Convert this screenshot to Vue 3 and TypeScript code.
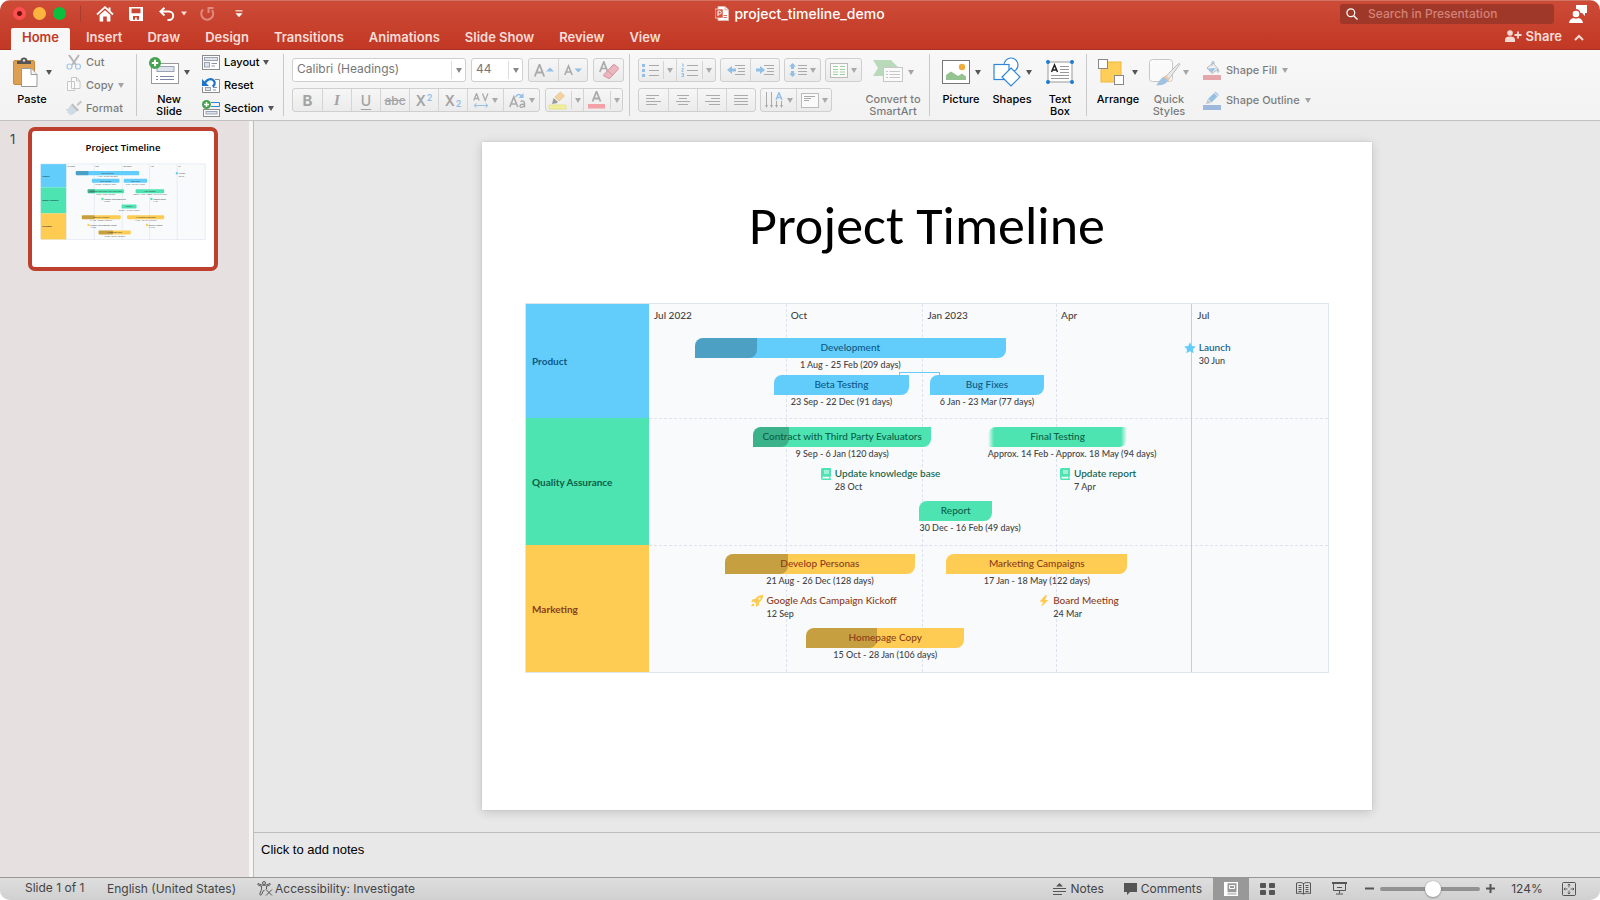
<script setup lang="ts">
import { computed, ref } from 'vue'

interface Item {
  kind: 'bar' | 'marker' | 'link'
  label?: string
  dates?: string
  from: string
  to?: string
  progress?: number
  fuzzy?: boolean
  icon?: 'star' | 'book' | 'rocket' | 'bolt'
}
interface Row { name: string; tone: string; color: string; lanes: Item[][] }

const tabs = ['Home', 'Insert', 'Draw', 'Design', 'Transitions', 'Animations', 'Slide Show', 'Review', 'View']
const activeTab = ref('Home')
const zoom = ref(54)
const search = ref('')
const notes = ref('')

const START = Date.UTC(2022, 6, 1)
const day = (d: string) => Math.round((Date.parse(d + 'T00:00:00Z') - START) / 86400000)

const months = [
  { label: 'Jul 2022', at: '2022-07-01' },
  { label: 'Oct', at: '2022-10-01' },
  { label: 'Jan 2023', at: '2023-01-01' },
  { label: 'Apr', at: '2023-04-01' },
  { label: 'Jul', at: '2023-07-01' },
]

const rows: Row[] = [
  {
    name: 'Product', tone: 'blue', color: '#62cdfb', lanes: [
      [
        { kind: 'bar', label: 'Development', dates: '1 Aug - 25 Feb (209 days)', from: '2022-08-01', to: '2023-02-26', progress: 20 },
        { kind: 'marker', label: 'Launch', dates: '30 Jun', from: '2023-06-30', icon: 'star' },
      ],
      [
        { kind: 'bar', label: 'Beta Testing', dates: '23 Sep - 22 Dec (91 days)', from: '2022-09-23', to: '2022-12-23' },
        { kind: 'link', from: '2022-12-16', to: '2023-01-13' },
        { kind: 'bar', label: 'Bug Fixes', dates: '6 Jan - 23 Mar (77 days)', from: '2023-01-06', to: '2023-03-24' },
      ],
    ],
  },
  {
    name: 'Quality Assurance', tone: 'green', color: '#4de4b2', lanes: [
      [
        { kind: 'bar', label: 'Contract with Third Party Evaluators', dates: '9 Sep - 6 Jan (120 days)', from: '2022-09-09', to: '2023-01-07', progress: 20 },
        { kind: 'bar', label: 'Final Testing', dates: 'Approx. 14 Feb - Approx. 18 May (94 days)', from: '2023-02-14', to: '2023-05-19', fuzzy: true },
      ],
      [
        { kind: 'marker', label: 'Update knowledge base', dates: '28 Oct', from: '2022-10-28', icon: 'book' },
        { kind: 'marker', label: 'Update report', dates: '7 Apr', from: '2023-04-07', icon: 'book' },
      ],
      [{ kind: 'bar', label: 'Report', dates: '30 Dec - 16 Feb (49 days)', from: '2022-12-30', to: '2023-02-17' }],
    ],
  },
  {
    name: 'Marketing', tone: 'amber', color: '#fecc52', lanes: [
      [
        { kind: 'bar', label: 'Develop Personas', dates: '21 Aug - 26 Dec (128 days)', from: '2022-08-21', to: '2022-12-27', progress: 33 },
        { kind: 'bar', label: 'Marketing Campaigns', dates: '17 Jan - 18 May (122 days)', from: '2023-01-17', to: '2023-05-19' },
      ],
      [
        { kind: 'marker', label: 'Google Ads Campaign Kickoff', dates: '12 Sep', from: '2022-09-12', icon: 'rocket' },
        { kind: 'marker', label: 'Board Meeting', dates: '24 Mar', from: '2023-03-24', icon: 'bolt' },
      ],
      [{ kind: 'bar', label: 'Homepage Copy', dates: '15 Oct - 28 Jan (106 days)', from: '2022-10-15', to: '2023-01-29', progress: 45 }],
    ],
  },
]

const place = (i: Item) => ({ gridColumn: `${day(i.from) + 1} / ${i.to ? day(i.to) + 1 : 'span 1'}` })

/* Thumbnail geometry in slide units */
const tx = (d: string) => 168 + day(d) * 1.485
const thumbRows = computed(() => {
  let y = 162
  return rows.map((r, n) => {
    const top = y
    const height = n === 0 ? 114 : 127
    y += height
    const first = top + (n === 0 ? 34 : 9)
    const items = r.lanes.flatMap((lane, l) =>
      lane.filter(i => i.kind !== 'link').map(i => {
        const x = tx(i.from)
        const w = i.to ? tx(i.to) - x : 0
        return { ...i, x, w, y: first + l * 37 }
      }))
    return { ...r, top, height, items }
  })
})
</script>

<template>
  <div class="window">
    <header class="titlebar">
      <div class="toprow">
        <div class="quick">
          <button class="light red" aria-label="Close"></button>
          <button class="light yellow" aria-label="Minimize"></button>
          <button class="light lime" aria-label="Full screen"></button>
          <span class="vline"></span>
          <button class="q home" aria-label="Home view">
            <svg width="18" height="16" viewBox="0 0 18 16"><path d="M1 8.5 9 1.2l8 7.3" fill="none" stroke="#fff" stroke-width="1.8" /><path d="M3.6 9 9 4.2 14.4 9v6.5h-3.6V10.600H7.200v4.900H3.600z" fill="#fff" /><path d="M12.500 1.500h2v4l-2-1.800z" fill="#fff" /></svg>
          </button>
          <button class="q save" aria-label="Save">
            <svg width="14" height="14" viewBox="0 0 14 14"><path fill="#fff" fill-rule="evenodd" d="M0 0h14v14H1.500L0 12.500zM2.500 1.600v4.600h9V1.600zM4 9v3.800h2V10.500h1.800v2.300H10V9z" /></svg>
          </button>
          <button class="q undo" aria-label="Undo">
            <svg width="16" height="14" viewBox="0 0 16 14"><path d="M5.500.8 1.500 4.600l4 3.800M2 4.600h8a4.200 4.200 0 0 1 0 8.400H8.500" fill="none" stroke="#fff" stroke-width="2" /></svg>
            <svg class="tri" width="6" height="5" viewBox="0 0 6 5"><path d="M0 .5h6L3 4.500z" fill="#f7dcd8" /></svg>
          </button>
          <button class="q redo" aria-label="Repeat">
            <svg width="15" height="15" viewBox="0 0 15 15"><path d="M3 3.500a6 6 0 1 0 9 .6M8.500 7V2h5" fill="none" stroke="#e08b7f" stroke-width="2" /></svg>
          </button>
          <button class="q" aria-label="Customize toolbar">
            <svg width="8" height="8" viewBox="0 0 8 8"><path d="M.5.800h7" stroke="#fff" stroke-width="1.500" opacity=".7" /><path d="M.5 3.300h7L4 7.300z" fill="#fff" /></svg>
          </button>
        </div>
        <h1 class="doc">
          <svg width="14" height="15" viewBox="0 0 14 15"><path d="M3 .5h7l3.500 3.500v10.500H3z" fill="#fff" stroke="#e0b9b2" /><path d="M10 .5V4h3.500" fill="#eee" stroke="#d99" stroke-width=".7" /><rect y="3" width="8" height="9" fill="#d9513c" stroke="#fff" stroke-width=".6" /><path d="M3 10V5h1.700a1.500 1.500 0 0 1 0 3H3" fill="none" stroke="#fff" /><path d="M8.500 9.500h3.500M8.500 11.500h3.500" stroke="#d9735f" /></svg>
          project_timeline_demo
        </h1>
        <div class="topright">
          <label class="search">
            <svg width="12" height="12" viewBox="0 0 12 12"><circle cx="4.800" cy="4.800" r="3.900" fill="none" stroke="#fff" stroke-width="1.200" /><path d="m7.700 7.700 3.800 3.800" stroke="#fff" stroke-width="1.300" /></svg>
            <input v-model="search" type="search" placeholder="Search in Presentation" aria-label="Search in Presentation">
          </label>
          <button class="q" aria-label="Feedback">
            <svg width="18" height="18" viewBox="0 0 18 18" fill="#fff"><path d="M7 0h11v8h-2v3l-3-3h-1.500A5 5 0 0 0 7 4z" /><circle cx="7" cy="9" r="3.300" /><path d="M0 18c.3-3 2.500-4.600 4.500-4.900a5 5 0 0 0 5 0c2 .3 4.200 1.900 4.500 4.900z" /></svg>
          </button>
        </div>
      </div>
      <div class="tabrow">
        <nav class="tabs" role="tablist">
          <button v-for="t in tabs" :key="t" role="tab" class="tab" :class="{ on: t === activeTab }" :aria-selected="t === activeTab" @click="activeTab = t">{{ t }}</button>
        </nav>
        <button class="share">
          <svg width="17" height="12" viewBox="0 0 17 12"><circle cx="5" cy="3" r="2.800" fill="#f7d9d4" /><path d="M0 12V9.500C0 7.600 2 6.500 5 6.500s5 1.100 5 3V12z" fill="#f7d9d4" /><path d="M13 1.500v7M9.500 5h7" stroke="#f7d9d4" stroke-width="1.800" /></svg>
          Share
        </button>
        <button class="collapse" aria-label="Collapse ribbon">
          <svg width="10" height="7" viewBox="0 0 10 7"><path d="m1 6 4-4 4 4" fill="none" stroke="#f7d9d4" stroke-width="2" /></svg>
        </button>
      </div>
    </header>

    <section class="ribbon" aria-label="Home">
      <div class="group g1">
        <button class="tool w48">
          <span class="pic"><svg width="25" height="30" viewBox="0 0 25 30"><rect x=".5" y="3.500" width="21" height="24" rx="1.500" fill="#dda052" stroke="#c98a3c" /><path d="M4 7V4h3.500a3.500 3.500 0 0 1 7 0H18v3z" fill="#555" /><circle cx="11" cy="3.500" r="1.300" fill="#ddd" /><path d="M8.500 11.500H18l6 6v12H8.500z" fill="#fff" stroke="#999" /><path d="M18 11.500v6h6" fill="#f4f4f4" stroke="#999" /></svg><i class="arr wide"></i></span>
          Paste
        </button>
        <div class="small">
          <button class="row off"><svg width="16" height="16" viewBox="0 0 16 16" fill="none"><path d="m3 1 7 10M13 1 6 11" stroke="#777" stroke-width="2" /><circle cx="3.500" cy="12.500" r="2.500" stroke="#5a9bd5" stroke-width="1.200" /><circle cx="12" cy="12.500" r="2.500" stroke="#5a9bd5" stroke-width="1.200" /></svg>Cut</button>
          <button class="row off"><svg width="16" height="16" viewBox="0 0 16 16" fill="#fff" stroke="#999"><path d="M1.500 4.500h7v9h-7zM5.500.5h5l3.500 3.500v7.500H5.500z" /><path d="M10.500.5V4H14" fill="none" /></svg>Copy<i class="arr"></i></button>
          <button class="row off"><svg width="16" height="16" viewBox="0 0 16 16"><path d="m10.500 4.500 4-4L16 2l-4 4z" fill="#999" /><path d="m6.500 3.500 6.500 6.500-2 1.500L5 5z" fill="#888" /><path d="m4.500 5.500 5.500 5.700C8 14 5 15 3.500 14.500c.5-1 .5-1.500.2-1.700-.8.200-1.400 0-2.200-.5.700-.4 1-.8.900-1.300L0 9.800c2 0 3.500-1.500 4.500-4.300z" fill="#a8c5e0" stroke="#8aa" stroke-width=".5" /></svg>Format</button>
        </div>
      </div>
      <span class="sep"></span>
      <div class="group g2">
        <button class="tool w48">
          <span class="pic"><svg width="30" height="30" viewBox="0 0 30 30"><rect x="2.500" y="6.500" width="27" height="20" fill="#fff" stroke="#999" /><rect x="8" y="9.500" width="17" height="5" fill="#dfe3ea" stroke="#9aa3b5" /><path d="M7 19.500h2M11 19.500h14M7 22.500h2M11 22.500h14" stroke="#7d88a8" /><circle cx="6" cy="6" r="6" fill="#46a24e" /><path d="M6 2.800v6.400M2.800 6h6.400" stroke="#fff" stroke-width="2" /></svg><i class="arr"></i></span>
          New<br>Slide
        </button>
        <div class="small">
          <button class="row"><svg width="18" height="15" viewBox="0 0 18 15" fill="none"><rect x=".5" y=".5" width="17" height="14" fill="#fff" stroke="#8b8b8b" /><rect x="2.500" y="2.500" width="13" height="3" fill="#dfe3ea" stroke="#9aa3b5" /><rect x="2.500" y="7.500" width="5" height="4.500" fill="#dfe3ea" stroke="#9aa3b5" /><path d="M9.500 8.500H15M9.500 11H13" stroke="#8a93a8" /></svg>Layout<i class="arr"></i></button>
          <button class="row"><svg width="18" height="16" viewBox="0 0 18 16" fill="none"><path d="M.5 10v5.500h17v-13H13" stroke="#8b8b8b" fill="#fff" /><rect x="3.500" y="10.500" width="5" height="3" fill="#dfe3ea" stroke="#9aa3b5" /><path d="M11 10.500h4M11 13h3" stroke="#8a93a8" /><path d="M2.500 7C4 2.500 9 .5 12 4c1.500 2 .5 4.500-1.500 5.500" stroke="#1b75c8" stroke-width="2.200" /><path d="M0 2v7h7z" fill="#1b75c8" /></svg>Reset</button>
          <button class="row"><svg width="18" height="17" viewBox="0 0 18 17" fill="none"><path d="M9 2.500h8.500v4H9" stroke="#2f86d6" /><rect x="1.500" y="9.500" width="16" height="7" fill="#fff" stroke="#8b8b8b" /><rect x="4" y="11.500" width="11" height="2.500" fill="#dfe3ea" stroke="#9aa3b5" /><circle cx="4.500" cy="4.500" r="4.500" fill="#46a24e" /><path d="M4.500 2v5M2 4.500h5" stroke="#fff" stroke-width="1.500" /></svg>Section<i class="arr"></i></button>
        </div>
      </div>
      <span class="sep"></span>
      <div class="group stack g3">
        <div class="line">
          <label class="combo w174"><select aria-label="Font"><option>Calibri (Headings)</option></select><i class="arr"></i></label>
          <label class="combo w52"><select aria-label="Font size"><option>44</option></select><i class="arr"></i></label>
          <div class="seg">
            <button class="w29" aria-label="Increase font size"><svg width="20" height="13" viewBox="0 0 20 13"><path d="m.8 12.500 4.700-12 4.700 12M2.500 8.500h6" class="gs" stroke-width="1.800" /><path d="M12 7.500h8l-4-4z" class="bf" /></svg></button>
            <button class="w29" aria-label="Decrease font size"><svg width="18" height="12" viewBox="0 0 18 12"><path d="m.8 11 3.700-9 3.700 9M2.200 8h4.600" class="gs" stroke-width="1.600" /><path d="M10.500 4.500h7.500l-3.700 4z" class="bf" /></svg></button>
          </div>
          <div class="seg"><button class="w29" aria-label="Clear formatting"><svg width="20" height="19" viewBox="0 0 20 19"><path d="m.8 11 4-10 4 10M2.200 7.500h5" class="gs" stroke-width="1.700" /><path d="m5 13.500 9-9.500q1-1 2 0l3 2.500q1 1 0 2L11 17q-1 1-2 0l-4-2q-1-.7 0-1.500z" fill="#eab6bf" stroke="#d3949f" /><path d="m8.500 9.800 5.500 4.500" stroke="#d3949f" /></svg></button></div>
        </div>
        <div class="line">
          <div class="seg">
            <button class="w29 b">B</button><button class="w29 i">I</button><button class="w29 u">U</button><button class="w29 s">abc</button>
            <button class="w29 x">X<sup>2</sup></button><button class="w29 x">X<sub>2</sub></button>
            <button class="w36" aria-label="Character spacing"><svg width="16" height="15" viewBox="0 0 16 15"><path d="m.8 7.500 2.700-7 2.700 7M2 5.500h3M9.500.5l2.700 7 2.700-7" class="gs" stroke-width="1.300" /><path d="M2 12.500h12M3.500 10.500l-2.500 2 2.500 2M12.500 10.500l2.500 2-2.500 2" class="bs" /></svg><i class="arr"></i></button>
            <button class="w36" aria-label="Change case"><svg width="17" height="15" viewBox="0 0 17 15"><path d="m.8 14 4-10 4 10M2.200 11h5" class="gs" stroke-width="1.600" /><path d="M11.500 8.500c2-1 4-.5 4 1.500v4.500m0-2.500c-2 3.500-5 2.500-4.500.7.500-1.700 2.500-1.700 4.500-1.700" class="gs" stroke-width="1.400" /><path d="M6.500 4c1-2.500 4-3.500 6.500-1" class="bs" stroke-width="1.500" /><path d="M14.500 0v5h-5z" class="bf" /></svg><i class="arr"></i></button>
          </div>
          <div class="seg">
            <button class="w37" aria-label="Highlight colour"><svg width="19" height="19" viewBox="0 0 19 19"><path d="M1 14h17v4H1z" fill="#f1ef9c" stroke="#e2df7c" stroke-width=".7" /><path d="m7 6 5.500-5 4 4-5.500 5z" fill="#f3d2a0" stroke="#dab880" stroke-width=".6" /><path d="m5.500 7 4.500 4-1.500 1.300-2 .2L4 13l.8-3z" fill="#999" /></svg><span class="cut"></span><i class="arr"></i></button>
            <button class="w39" aria-label="Font colour"><svg width="19" height="18" viewBox="0 0 19 18"><path d="m5.500 10.500 4-10 4 10M7 7.500h5" class="gs" stroke-width="1.800" /><rect x="1" y="13" width="17" height="4.500" fill="#f3a0a6" /></svg><span class="cut"></span><i class="arr"></i></button>
          </div>
        </div>
      </div>
      <span class="sep"></span>
      <div class="group g4">
        <div class="stack">
          <div class="line">
            <div class="seg">
              <button class="w37" aria-label="Bullets"><svg width="17" height="14" viewBox="0 0 17 14"><path d="M7 2.500h10M7 7.500h10M7 12.500h10" class="gs" /><path d="M0 1h3v3H0zM0 6h3v3H0zM0 11h3v3H0z" class="bf" /></svg><span class="cut"></span><i class="arr"></i></button>
              <button class="w39" aria-label="Numbering"><svg width="17" height="14" viewBox="0 0 17 14"><path d="M6 2.500h11M6 7.500h11M6 12.500h11" class="gs" /><path d="M1 1h1v3M.5 5.700h2l-1.800 2.600h2M.5 10.500h2v3h-2M1 12h1.500" class="bs" /></svg><span class="cut"></span><i class="arr"></i></button>
            </div>
            <div class="seg">
              <button class="w29" aria-label="Decrease indent"><svg width="18" height="12" viewBox="0 0 18 12"><path d="M8 1.500h10M11 4.500h7M11 7.500h7M8 10.500h10" class="gs" /><path d="M0 6l5-4v2.500h4v3H5V10z" class="bf" /></svg></button>
              <button class="w29" aria-label="Increase indent"><svg width="18" height="12" viewBox="0 0 18 12"><path d="M8 1.500h10M11 4.500h7M11 7.500h7M8 10.500h10" class="gs" /><path d="M9 6 4 2v2.500H0v3h4V10z" class="bf" /></svg></button>
            </div>
            <div class="seg"><button class="w35" aria-label="Line spacing"><svg width="18" height="14" viewBox="0 0 18 14"><path d="M9 2.500h9M9 5.500h9M9 8.500h9M9 11.500h9" class="gs" /><path d="m3.500 0 3.500 3.500H5V6H2V3.500H0zM3.500 14 7 10.500H5V8H2v2.500H0z" class="bf" /></svg><i class="arr"></i></button></div>
            <div class="seg"><button class="w35" aria-label="Columns"><svg width="18" height="15" viewBox="0 0 18 15"><rect x=".5" y=".5" width="17" height="14" fill="#fafafa" stroke="#bbb" /><path d="M3 3.500h5M3 6.500h5M3 9h5M3 11.500h5M10 3.500h5M10 6.500h5M10 9h5M10 11.500h5" stroke="#9fd19f" stroke-width="1.200" /></svg><i class="arr"></i></button></div>
          </div>
          <div class="line">
            <div class="seg">
              <button class="w29" aria-label="Align left"><svg width="16" height="11" viewBox="0 0 16 11"><path d="M0 .5h13M0 3.500h9M0 6.500h15M0 9.500h11" class="gs" /></svg></button>
              <button class="w29" aria-label="Center"><svg width="14" height="11" viewBox="0 0 14 11"><path d="M1 .5h12M3 3.500h8M0 6.500h14M2 9.500h10" class="gs" /></svg></button>
              <button class="w29" aria-label="Align right"><svg width="16" height="11" viewBox="0 0 16 11"><path d="M2 .5h14M7 3.500h9M1 6.500h15M5 9.500h11" class="gs" /></svg></button>
              <button class="w29" aria-label="Justify"><svg width="14" height="11" viewBox="0 0 14 11"><path d="M0 .5h14M0 3.500h14M0 6.500h14M0 9.500h14" class="gs" /></svg></button>
            </div>
            <div class="seg">
              <button class="w35" aria-label="Text direction"><svg width="19" height="17" viewBox="0 0 19 17"><path d="M1.500 0v15M6.500 0v15M11.500 9v6M16.500 9v6" class="gs" /><path d="M0 13l1.500 3L3 13zM5 13l1.500 3L8 13zM10 13l1.500 3 1.500-3zM15 13l1.500 3 1.500-3z" fill="#aaa" /><path d="m11 8 3-7.500L17 8M12 5.500h4" class="bs" stroke-width="1.400" /></svg><i class="arr"></i></button>
              <button class="w35" aria-label="Align text"><svg width="18" height="15" viewBox="0 0 18 15"><rect x=".5" y=".5" width="17" height="14" fill="#fafafa" stroke="#bbb" /><path d="M3 3.500h11M3 5.500h7M3 7.500h5" class="gs" /></svg><i class="arr"></i></button>
            </div>
          </div>
        </div>
        <button class="tool w62 off">
          <span class="pic"><svg width="30" height="24" viewBox="0 0 30 24"><path d="M0 0h18l7 7-7 9H0l5-8z" fill="#7cc07f" /><rect x="10.500" y="7.500" width="19" height="14" fill="#fff" stroke="#999" /><path d="M13 11.500h2M16.500 11.500H27M13 14.500h2M16.500 14.500H27M13 17.500h2M16.500 17.500H27" stroke="#999" /></svg><i class="arr"></i></span>
          Convert to<br>SmartArt
        </button>
      </div>
      <span class="sep"></span>
      <div class="group g5">
        <button class="tool w48">
          <span class="pic"><svg width="28" height="24" viewBox="0 0 28 24"><rect x=".5" y=".5" width="27" height="23" fill="#fff" stroke="#777" /><path d="M4 20v-5l5-3.500 7 4.500 4-2.500 4 3V20z" fill="#94c391" /><circle cx="20" cy="7" r="3.200" fill="#f0ac3c" /></svg><i class="arr"></i></span>
          Picture
        </button>
        <button class="tool w52">
          <span class="pic"><svg width="28" height="30" viewBox="0 0 28 30" fill="#fff" stroke="#2f86d6" stroke-width="1.200"><circle cx="18" cy="8" r="7" /><rect x="1" y="7.500" width="15" height="15" /><path d="m18 11 9 9-9 9-9-9z" /></svg><i class="arr"></i></span>
          Shapes
        </button>
        <button class="tool w42">
          <span class="pic"><svg width="28" height="24" viewBox="0 0 28 24"><rect x="2" y="2" width="24" height="20" fill="#fff" stroke="#999" /><path d="m5.500 12 3-7 3 7M6.700 10h3.600" fill="none" stroke="#222" stroke-width="1.500" /><path d="M14 6.500h9M14 9.500h9M14 12.500h9M5 15.500h18M5 18.500h18" stroke="#999" /><g fill="#1b7bd0"><circle cx="2" cy="2" r="2" /><circle cx="26" cy="2" r="2" /><circle cx="2" cy="22" r="2" /><circle cx="26" cy="22" r="2" /></g></svg></span>
          Text<br>Box
        </button>
      </div>
      <span class="sep"></span>
      <div class="group g6">
        <button class="tool w56">
          <span class="pic"><svg width="26" height="26" viewBox="0 0 26 26"><rect x="3" y="3" width="20" height="20" fill="#ffce58" stroke="#f0b53b" /><rect x=".5" y=".5" width="9" height="9" fill="#fff" stroke="#888" /><rect x="16.500" y="16.500" width="9" height="9" fill="#fff" stroke="#888" /></svg><i class="arr wide"></i></span>
          Arrange
        </button>
        <button class="tool w46 off">
          <span class="pic tight"><svg width="32" height="28" viewBox="0 0 32 28"><rect x=".5" y="1.500" width="23" height="22" rx="3" fill="#fff" stroke="#999" /><path d="M31 6 20 21l-3-3L29 6q1.500-1 2 0z" fill="#ddd" stroke="#888" /><path d="m17 17 4 4-2 3-5-5z" fill="#e8a060" /><path d="M14 19q3 .5 5 4c-3 4-8 5-12 4 2-1 3-5 7-8z" fill="#4d8fcd" /></svg><i class="arr"></i></span>
          Quick<br>Styles
        </button>
        <div class="small tall">
          <button class="row off"><svg width="18" height="19" viewBox="0 0 18 19"><rect y="14" width="18" height="5" fill="#d65a64" /><path d="m4 7 6-5 5 6-6 4.500z" fill="#eee" stroke="#777" /><path d="m5 7.500 8-.5-4 4.500z" fill="#3b8fd6" /><path d="M9 5V1q1-1.500 2 0v2M15 8q2 3 0 3.500Q13.500 11 15 8" fill="none" stroke="#5a7fa8" /></svg>Shape Fill<i class="arr"></i></button>
          <button class="row off"><svg width="18" height="19" viewBox="0 0 18 19"><rect y="14" width="18" height="5" fill="#4b7fc4" /><path d="m5 8 6-6 3.500 3.500-6 6z" fill="#3b8fd6" /><path d="m11.500 1.500 1-1 3.500 3.500-1 1z" fill="#5a9bd5" /><path d="M4.500 8.500 8 12l-5 1z" fill="#999" /></svg>Shape Outline<i class="arr"></i></button>
        </div>
      </div>
    </section>

    <div class="body">
      <aside class="panel" aria-label="Slides">
        <span class="num">1</span>
        <button class="thumb" aria-label="Slide 1">
          <svg viewBox="0 0 890 664">
            <text x="445" y="98" text-anchor="middle" class="t-title">Project Timeline</text>
            <rect x="43" y="161" width="804" height="370" fill="#f8fafc" stroke="#dbe6ef" stroke-width="3" />
            <path v-for="m in months" :key="m.at" :d="`M${tx(m.at)} 161v370`" stroke="#dde5ee" stroke-width="3" />
            <text v-for="m in months" :key="m.label" :x="tx(m.at) + 5" y="178" class="t-month">{{ m.label }}</text>
            <g v-for="r in thumbRows" :key="r.name" :class="r.tone">
              <rect x="43" :y="r.top" width="124" :height="r.height" :fill="r.color" />
              <text x="50" :y="r.top + r.height / 2 + 4" class="t-name">{{ r.name }}</text>
              <g v-for="i in r.items" :key="i.label">
                <template v-if="i.kind === 'bar'">
                  <rect :x="i.x" :y="i.y" :width="i.w" height="20" rx="5" :fill="r.color" />
                  <rect v-if="i.progress" :x="i.x" :y="i.y" :width="i.w * i.progress / 100" height="20" rx="5" fill="rgba(0,0,0,.22)" />
                  <text :x="i.x + i.w / 2" :y="i.y + 14" text-anchor="middle" class="t-label">{{ i.label }}</text>
                  <text :x="i.x + i.w / 2" :y="i.y + 30" text-anchor="middle" class="t-date">{{ i.dates }}</text>
                </template>
                <template v-else>
                  <rect :x="i.x - 5" :y="i.y + 5" width="10" height="11" :fill="r.color" />
                  <text :x="i.x + 9" :y="i.y + 14" class="t-label">{{ i.label }}</text>
                  <text :x="i.x + 9" :y="i.y + 27" class="t-date">{{ i.dates }}</text>
                </template>
              </g>
            </g>
          </svg>
        </button>
      </aside>
      <div class="splitter"></div>
      <main class="work">
        <div class="stage">
          <article class="slide">
            <h2 class="slide-title">Project Timeline</h2>
            <div class="chart">
              <div class="scale">
                <span v-for="m in months" :key="m.at" class="month" :class="{ first: m.at === '2022-07-01', solid: m.at === '2023-07-01' }" :style="{ gridColumn: `${day(m.at) + 1} / span 1` }">{{ m.label }}</span>
              </div>
              <div v-for="r in rows" :key="r.name" class="crow" :class="r.tone">
                <div class="cname">{{ r.name }}</div>
                <div class="lanes">
                  <div v-for="(lane, l) in r.lanes" :key="l" class="lane">
                    <template v-for="(i, n) in lane" :key="n">
                      <div v-if="i.kind === 'bar'" class="item" :style="place(i)">
                        <div class="bar" :class="{ fuzzy: i.fuzzy }">
                          <span v-if="i.progress" class="done" :style="{ width: i.progress + '%' }"></span>
                          <span class="blabel">{{ i.label }}</span>
                        </div>
                        <div class="date">{{ i.dates }}</div>
                      </div>
                      <div v-else-if="i.kind === 'link'" class="link" :style="place(i)"></div>
                      <div v-else class="marker" :style="place(i)">
                        <svg v-if="i.icon === 'star'" width="12" height="12" viewBox="0 0 12 12"><path d="m6 .3 1.800 3.600 4 .5-2.900 2.800.7 4L6 9.300l-3.600 1.900.7-4L.2 4.400l4-.5z" /></svg>
                        <svg v-else-if="i.icon === 'book'" width="12" height="12" viewBox="0 0 12 12"><path fill-rule="evenodd" d="M2.500 0H11v8.500h-.7v2H11V12H2.500A1.700 1.700 0 0 1 1 10.300V1.500A1.500 1.500 0 0 1 2.500 0zM4 2.500v.9h5v-.9zm0 2v.9h5v-.9zM2.500 8.800v1.700h6.700V8.800z" /></svg>
                        <svg v-else-if="i.icon === 'rocket'" width="12" height="12" viewBox="0 0 12 12"><path fill-rule="evenodd" d="M12 0c.2 3.300-1 5.800-4 7.800V10l-3 2V8.800L3.200 7H0l2-3h2.200C6 1.200 8.700-.1 12 0zM8.500 2.500a1.100 1.100 0 1 0 .01 0zM.5 11.500c0-2 .8-3 2-3l1 1c0 1.200-1 2-3 2z" /></svg>
                        <svg v-else width="12" height="12" viewBox="0 0 12 12"><path d="M7.500 0 1.500 6.500l3.500.4L3 12l7.500-6.700L7 4.800 9 .7z" /></svg>
                        <div><div class="mlabel">{{ i.label }}</div><div class="mdate">{{ i.dates }}</div></div>
                      </div>
                    </template>
                  </div>
                </div>
              </div>
            </div>
          </article>
        </div>
        <textarea v-model="notes" class="notes" placeholder="Click to add notes" aria-label="Notes"></textarea>
      </main>
    </div>

    <footer class="status">
      <span class="count">Slide 1 of 1</span>
      <button class="lang">English (United States)</button>
      <button class="acc">
        <svg width="16" height="15" viewBox="0 0 16 15" fill="none" stroke="#555"><circle cx="7" cy="2" r="1.500" /><path d="M1 2.500C.2 3.500 1 4 2 4.400l2.500.9v3L2.800 13c0 1.300 1.400 1.500 1.800.4L6.500 9.500h1M13 2.500c.8 1 0 1.500-1 1.900l-2.500.9v3M1 2.500l4 1.700h4l4-1.700M9 8.500l6 6M15 8.500l-6 6" /></svg>
        Accessibility: Investigate
      </button>
      <span class="grow"></span>
      <button class="notes-btn"><svg width="13" height="12" viewBox="0 0 13 12"><path d="M0 5.500h13M0 8.500h13M0 11.500h9" stroke="#555" /><path d="M3 3.500 6.500 0 10 3.500z" fill="#555" /></svg>Notes</button>
      <button class="com-btn"><svg width="13" height="12" viewBox="0 0 13 12"><path d="M0 0h13v9H6l-3 3V9H0z" fill="#555" /></svg>Comments</button>
      <button class="view on" aria-label="Normal view"><svg width="14" height="14" viewBox="0 0 14 14"><path fill="#fff" fill-rule="evenodd" d="M0 0h14v14H0zM3.500 1.200v9h9v-9zM3.500 11.500v1h9v-1z" /><path d="M5.500 3.500h5v3h-5z" fill="none" stroke="#fff" /></svg></button>
      <button class="view" aria-label="Slide sorter"><svg width="15" height="12" viewBox="0 0 15 12" fill="#555"><rect width="6" height="5" rx="1" /><rect x="9" width="6" height="5" rx="1" /><rect y="7" width="6" height="5" rx="1" /><rect x="9" y="7" width="6" height="5" rx="1" /></svg></button>
      <button class="view" aria-label="Reading view"><svg width="15" height="13" viewBox="0 0 15 13" fill="none" stroke="#555"><path d="M.5 1C3 .3 5.500.3 7.500 1.500 9.500.3 12 .3 14.500 1v10.500c-2.500-.6-5-.6-7 .6-2-1.200-4.500-1.200-7-.6zM7.500 1.500V12M2.500 3.500h3M2.500 5.500h3M2.500 7.500h3M2.500 9.500h3M9.500 3.500h3M9.500 5.500h3M9.500 7.500h3M9.500 9.500h3" /></svg></button>
      <button class="view" aria-label="Slide show"><svg width="15" height="13" viewBox="0 0 15 13" fill="none" stroke="#555"><path d="M0 1h15" stroke-width="2" /><path d="M1.500 2v6.500h12V2M5 5.500h5M7.500 8.500v3M4 12h7" /></svg></button>
      <div class="zoomer">
        <button class="z" aria-label="Zoom out"><svg width="9" height="9" viewBox="0 0 9 9"><path d="M0 4.500h9" stroke="#555" stroke-width="2" /></svg></button>
        <input v-model.number="zoom" type="range" min="0" max="100" aria-label="Zoom">
        <button class="z" aria-label="Zoom in"><svg width="9" height="9" viewBox="0 0 9 9"><path d="M0 4.500h9M4.500 0v9" stroke="#555" stroke-width="2" /></svg></button>
      </div>
      <button class="pct">124%</button>
      <button class="fit" aria-label="Fit slide to window"><svg width="14" height="14" viewBox="0 0 14 14" fill="none" stroke="#555"><rect x=".5" y=".5" width="13" height="13" rx="1" /><path d="M7 2v3.500M7 8.500V12M2 7h3.500M8.500 7H12M5.800 3.300 7 2l1.200 1.300M5.800 10.700 7 12l1.200-1.300M3.300 5.800 2 7l1.300 1.200M10.700 5.800 12 7l-1.300 1.200" stroke-width=".9" /></svg></button>
    </footer>
  </div>
</template>

<style>
body { margin: 0; background: #fff; }
</style>

<style scoped>
* { box-sizing: border-box; }
.window { height: 100vh; display: flex; flex-direction: column; overflow: hidden; border-radius: 10px; background: #e8e8e8; font-family: Inter, Roboto, "Liberation Sans", sans-serif; font-size: 12px; color: #000; }
button { font: inherit; color: inherit; background: none; border: 0; padding: 0; margin: 0; display: flex; align-items: center; justify-content: center; white-space: nowrap; }
svg { display: block; flex: none; }
.arr { flex: none; width: 0; height: 0; border: 3px solid transparent; border-top: 5px solid #555; border-bottom: 0; }
.arr.wide { margin-left: 3px; }

/* title bar */
.titlebar { flex: none; height: 50px; background: linear-gradient(#cc4b37, #c23824); border-top: 1px solid #d27363; border-bottom: 1px solid #a93222; color: #f8dcd7; }
.toprow { height: 27px; padding-bottom: 2px; display: grid; grid-template-columns: 1fr auto 1fr; align-items: center; }
.quick { display: flex; align-items: center; padding-left: 13px; }
.light { width: 13px; height: 13px; border-radius: 50%; margin-right: 7px; }
.red { background: radial-gradient(circle, #6e1210 2px, #fc4f4f 3px); }
.yellow { background: #fdb43e; }
.lime { background: #0abf3c; }
.vline { width: 1px; height: 16px; background: #ab3c2c; margin: 0 15px 0 7px; }
.home { margin-right: 15px; }
.save { margin-right: 16px; }
.undo { gap: 6px; margin-right: 13px; }
.redo { margin-right: 20px; }
.doc { margin: 0; display: flex; align-items: center; gap: 5px; font-size: 14px; font-weight: 500; color: #fff; line-height: 18px; }
.topright { display: flex; justify-content: flex-end; align-items: center; gap: 15px; padding-right: 13px; }
.search { width: 214px; height: 20px; border-radius: 3px; background: #a03829; display: flex; align-items: center; gap: 10px; padding: 0 6px; }
.search input { flex: 1; min-width: 0; border: 0; padding: 0; outline: 0; background: none; color: #fff; font: 500 12px Inter, Roboto, sans-serif; }
.search input::placeholder { color: #d38377; opacity: 1; }
.tabrow { height: 22px; display: flex; align-items: stretch; padding-left: 11px; }
.tabs { flex: 1; display: flex; gap: 1px; }
.tab { padding: 0 12px; font-size: 13px; font-weight: 600; line-height: 18px; align-items: flex-start; color: #f8dcd7; }
.tab.on { background: #f7f7f7; color: #c23a27; border-radius: 2px 2px 0 0; height: 23px; padding: 0 11px; margin-right: 3px; }
.share { gap: 4px; font-size: 13px; font-weight: 600; height: 16px; margin-right: 12px; }
.collapse { height: 18px; margin-right: 16px; }

/* ribbon */
.ribbon { flex: none; height: 71px; display: flex; align-items: center; background: linear-gradient(#f8f8f8, #f2f2f2); border-bottom: 1px solid #c2c2c2; font-size: 11px; font-weight: 500; }
.group { display: flex; height: 70px; align-items: center; flex: none; }
.sep { flex: none; width: 1px; height: 62px; background: #c9c9c9; }
.g1 { width: 136px; padding-left: 8px; gap: 10px; }
.g2 { width: 146px; padding-left: 8px; gap: 9px; }
.g3 { width: 345px; padding-left: 8px; }
.g4 { width: 299px; padding-left: 8px; }
.g5 { width: 156px; padding-left: 7px; gap: 1px; }
.g6 { padding-left: 3px; }
.tool { align-self: flex-start; margin-top: 7px; flex-direction: column; line-height: 12px; text-align: center; }
.pic { height: 30px; margin-bottom: 6px; display: flex; align-items: center; justify-content: center; gap: 5px; }
.pic.tight { gap: 2px; }
.small { display: flex; flex-direction: column; }
.row { height: 23px; gap: 4px; justify-content: flex-start; }
.tall { padding-left: 11px; }
.tall .row { height: 30px; gap: 5px; }
.off { opacity: .5; }
.stack { display: flex; flex-direction: column; justify-content: center; align-items: flex-start; gap: 6px; }
.line { display: flex; gap: 5px; }
.g4 .line { gap: 4px; }
.combo { height: 24px; display: flex; align-items: center; background: #fff; border: 1px solid #cfcfcf; border-radius: 3px; padding-right: 3px; }
.combo select { flex: 1; min-width: 0; height: 18px; appearance: none; border: 0; border-right: 1px solid #ddd; margin-right: 4px; padding: 0 0 2px 4px; outline: 0; background: none; color: #777; font: 400 12px/16px Inter, Roboto, sans-serif; }
.combo .arr { border-top-color: #888; }
.seg { display: flex; height: 24px; border: 1px solid #cfcfcf; border-radius: 3px; background: linear-gradient(#f6f6f6, #ebebeb); }
.seg button { color: #a3a3a3; gap: 3px; border-left: 1px solid #d4d4d4; }
.seg button:first-child { border-left: 0; }
.seg .arr { border-top-color: #aaa; }
.cut { width: 1px; height: 18px; background: #d4d4d4; margin-left: 1px; }
.gs { fill: none; stroke: #aaa; }
.bs { fill: none; stroke: #93bfe6; }
.bf { fill: #93bfe6; }
.w29 { width: 29px; } .w35 { width: 35px; } .w36 { width: 36px; } .w37 { width: 37px; } .w39 { width: 39px; } .w42 { width: 42px; } .w46 { width: 46px; }
.w48 { width: 48px; } .w52 { width: 52px; } .w56 { width: 56px; } .w62 { width: 62px; } .w174 { width: 174px; }
.seg .b { font-size: 15px; font-weight: 700; }
.seg .i { font: italic 700 15px "Liberation Serif", serif; }
.seg .u { font-size: 14px; font-weight: 500; text-decoration: underline; text-underline-offset: 3px; }
.seg .s { font-size: 12px; font-weight: 500; text-decoration: line-through; }
.seg .x { font-size: 14px; font-weight: 600; gap: 1px; }
.x sup, .x sub { font-size: 9px; line-height: 9px; color: #93bfe6; }
.x sup { align-self: flex-start; margin-top: 4px; }
.x sub { align-self: flex-end; margin-bottom: 3px; }

/* body */
.body { flex: 1; min-height: 0; display: flex; }
.panel { flex: none; width: 249px; background: #e7e0e0; display: flex; align-items: flex-start; padding: 6px 0 0 10px; }
.num { width: 18px; margin-top: 3px; font-size: 13px; line-height: 18px; color: #444; }
.thumb { width: 190px; border: 4px solid #bd3f2d; border-radius: 7px; background: #fff; overflow: hidden; }
.thumb svg { width: 100%; height: auto; }
.t-title { font: 600 47px "Open Sans", "Noto Sans", sans-serif; }
.t-month, .t-label { font: 10px Lato, sans-serif; fill: #444; }
.t-date { font: 9px Lato, sans-serif; fill: #555; }
.t-name { font: 700 10px Lato, sans-serif; fill: #134; }
.splitter { flex: none; width: 5px; background: #f5f5f5; border-right: 1px solid #bdbdbd; }
.work { flex: 1; min-width: 0; display: flex; flex-direction: column; }
.stage { flex: 1; min-height: 0; display: flex; justify-content: center; padding: 21px 0 22px; }
.slide { height: 100%; aspect-ratio: 890 / 668; background: #fff; box-shadow: 0 0 1px #aaa, 0 2px 10px rgba(0, 0, 0, .16); padding: 0 43px; }
.slide-title { margin: 0; padding-top: 51px; height: 161px; font: 400 54px/66px Carlito, Calibri, Lato, sans-serif; text-align: center; }

/* timeline chart */
.chart { position: relative; border: 1px solid #dae6f0; background: #f8fafc; font-family: Lato, "Open Sans", sans-serif; font-size: 10px; font-weight: 500; }
.scale { position: absolute; inset: 0 0 0 123px; display: grid; grid-template-columns: repeat(457, minmax(0, 1fr)); }
.month { border-left: 1px dashed #dde3ee; padding: 5px 0 0 4px; line-height: 12px; white-space: nowrap; color: #444; }
.month.first { border-left-color: transparent; }
.month.solid { border-left: 1px solid #9adcfb; padding-left: 5px; }
.crow { display: flex; }
.cname { flex: none; width: 123px; padding-left: 6px; display: flex; align-items: center; background: var(--fill); color: var(--ink); font-weight: 700; }
.blue { --fill: #62cdfb; --ink: #0c5885; }
.green { --fill: #4de4b2; --ink: #0a6048; }
.amber { --fill: #fecc52; --ink: #8c3c1a; }
.lanes { flex: 1; min-width: 0; display: flex; flex-direction: column; gap: 3px; padding: 8px 0 10px; }
.blue .lanes { padding: 34px 0 9px; }
.crow + .crow .lanes { border-top: 1px dashed #dde3ee; }
.lane { position: relative; height: 34px; display: grid; grid-template-columns: repeat(457, minmax(0, 1fr)); grid-template-rows: 34px; }
.lane > * { grid-row: 1; }
.bar { position: relative; height: 20px; padding-bottom: 2px; border-radius: 8px 0; background: var(--fill); color: var(--ink); overflow: hidden; display: flex; align-items: center; justify-content: center; white-space: nowrap; }
.bar.fuzzy { background: linear-gradient(90deg, transparent, var(--fill) 6px, var(--fill) calc(100% - 6px), transparent); }
.done { position: absolute; inset: 0 auto 0 0; border-radius: 0 0 8px 0; background: rgba(0, 0, 0, .22); }
.blabel { position: relative; }
.date { width: max-content; min-width: 100%; text-align: center; white-space: nowrap; font-size: 9px; line-height: 14px; color: #444; }
.link { height: 4px; margin-top: -3px; border: 1px solid #62cdfb; border-bottom: 0; }
.marker { display: flex; gap: 3px; width: max-content; margin-left: -6px; white-space: nowrap; }
.marker svg { margin-top: 4px; fill: var(--fill); }
.mlabel { padding-top: 1px; line-height: 16px; color: var(--ink); }
.mdate { padding-top: 1px; font-size: 9px; line-height: 10px; color: #444; }

.notes { flex: none; height: 45px; resize: none; border: 0; border-top: 1px solid #bebebe; outline: 0; background: #e8e8e8; padding: 9px 7px; font: 13px/16px "Liberation Sans", Arial, sans-serif; color: #000; }
.notes::placeholder { color: #000; opacity: 1; }

/* status bar */
.status { flex: none; height: 23px; display: flex; align-items: center; background: linear-gradient(#dedede, #d0d0d0); border-top: 1px solid #979797; color: #444; padding: 0 24px 0 25px; }
.status button, .count { height: 22px; padding-bottom: 1px; line-height: 20px; }
.count { width: 82px; }
.lang { width: 130px; justify-content: flex-start; margin-right: 20px; }
.acc { gap: 2px; }
.grow { flex: 1; }
.notes-btn, .com-btn { gap: 4px; }
.notes-btn { margin-right: 20px; }
.com-btn { margin-right: 11px; }
.view { width: 36px; }
.view.on { background: #989898; }
.zoomer { display: flex; align-items: center; gap: 6px; margin-left: 8px; }
.z { width: 9px; }
.zoomer input { width: 100px; height: 18px; margin: 0; appearance: none; background: none; }
.zoomer input::-webkit-slider-runnable-track { height: 4px; border-radius: 2px; background: #929292; }
.zoomer input::-webkit-slider-thumb { appearance: none; width: 16px; height: 16px; margin-top: -6px; border-radius: 50%; background: #fff; box-shadow: 0 0 1px #888, 0 1px 2px rgba(0, 0, 0, .3); }
.pct { width: 32px; margin: 0 19px 0 16px; }
</style>
